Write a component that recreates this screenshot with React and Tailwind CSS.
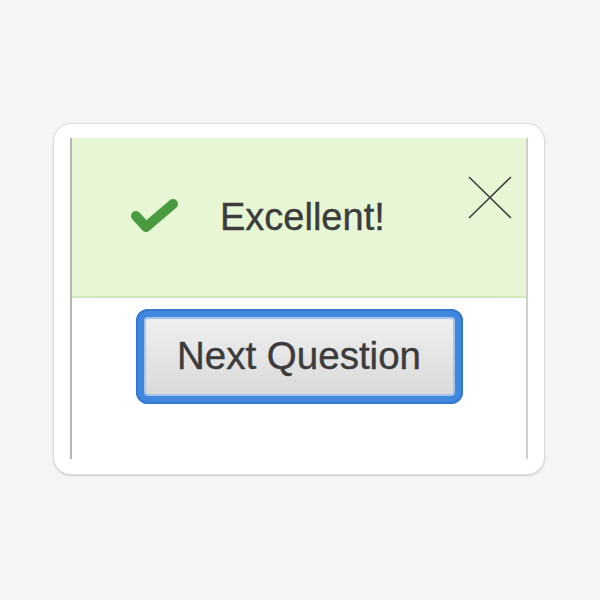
export default function App() {
  return (
    <div className="h-[600px] w-[600px] bg-[#f5f5f5] pl-[53px] pt-[123px]" style={{ fontFamily: '"Liberation Sans", Arial, sans-serif' }}>
      <div className="h-[352px] w-[492px] rounded-[18px] border border-[#dcdcdc] bg-white px-[16px] pt-[14px] pb-[15px] shadow-[0_1px_2px_rgba(0,0,0,0.15)]">
        <div className="flex h-full flex-col border-x-2 border-l-[#b5b5b5] border-r-[#cfcfcf]">
          <div className="relative flex h-[160px] items-center border-b-2 border-[#cfe9ba] bg-[#e7f7d6] pl-[57px]">
            <svg width="50" height="40" viewBox="0 0 50 40" className="shrink-0">
              <polyline points="7,19 17,30 44,7" fill="none" stroke="#4a9b3f" strokeWidth="10" strokeLinecap="round" strokeLinejoin="round" />
            </svg>
            <span className="ml-[41px] text-[38px] leading-none text-[#3c3c3c] [-webkit-text-stroke:0.4px_#3c3c3c]">Excellent!</span>
            <svg width="44" height="43" viewBox="0 0 44 43" className="absolute right-[14px] top-[38px]">
              <path d="M1 1 L43 42 M43 1 L1 42" stroke="#3f3f3f" strokeWidth="1.6" fill="none" />
            </svg>
          </div>
          <div className="flex justify-center pt-[11px]">
            <div className="rounded-[12px] bg-[#3f88de] p-[8px] shadow-[inset_0_0_0_2px_#3479cf]">
              <button className="flex h-[79px] w-[311px] items-center justify-center rounded-[4px] border-2 border-[#a3c5ee] bg-gradient-to-b from-[#efefef] to-[#dadada] text-[38.5px] leading-none text-[#3c3c3c] [-webkit-text-stroke:0.4px_#3c3c3c]">
                Next Question
              </button>
            </div>
          </div>
        </div>
      </div>
    </div>
  );
}
